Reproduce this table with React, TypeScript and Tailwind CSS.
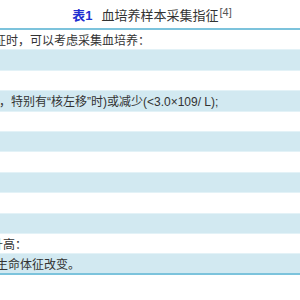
const FONT = 'font-["Liberation_Sans","Noto_Sans_CJK_SC",sans-serif]'

const ROWS: { text?: string; shift?: string }[] = [
  { text: '体征时，可以考虑采集血培养：', shift: 'ml-[-18px]' },
  {},
  {},
  { text: '，特别有“核左移”时)或减少(<3.0×109/ L);', shift: 'ml-[-1px]' },
  {},
  {},
  {},
  {},
  {},
  {},
  { text: '升高：', shift: 'ml-[-9px]' },
  { text: '生命体征改变。', shift: 'ml-[-4px]' },
]

export default function App() {
  return (
    <div className={`w-[300px] h-[300px] bg-white overflow-hidden ${FONT}`}>
      <div className="h-[28px] flex items-center justify-center pt-[3px] pl-[4px] text-[13px] text-[#333]">
        <span className="font-bold text-[#1f2fd0] mr-[9px]">表1</span>
        <span>血培养样本采集指征</span>
        <sup className="text-[11px] text-[#555] ml-[1px] -top-[4px]">[4]</sup>
      </div>

      <div className="border-t-2 border-[#7cc3dc]">
        {ROWS.map((row, i) => {
          const last = i === ROWS.length - 1
          return (
            <div
              key={i}
              className={[
                'h-[20.4px] flex items-center overflow-hidden whitespace-nowrap text-[12px] text-[#333] pt-[2px]',
                i % 2 === 1 ? 'bg-[#d2e9f1]' : 'bg-white',
                last ? 'border-b-2 border-[#7cc3dc]' : 'border-b border-[#e3f2f7]',
              ].join(' ')}
            >
              {row.text && <span className={`shrink-0 ${row.shift}`}>{row.text}</span>}
            </div>
          )
        })}
      </div>
    </div>
  )
}
